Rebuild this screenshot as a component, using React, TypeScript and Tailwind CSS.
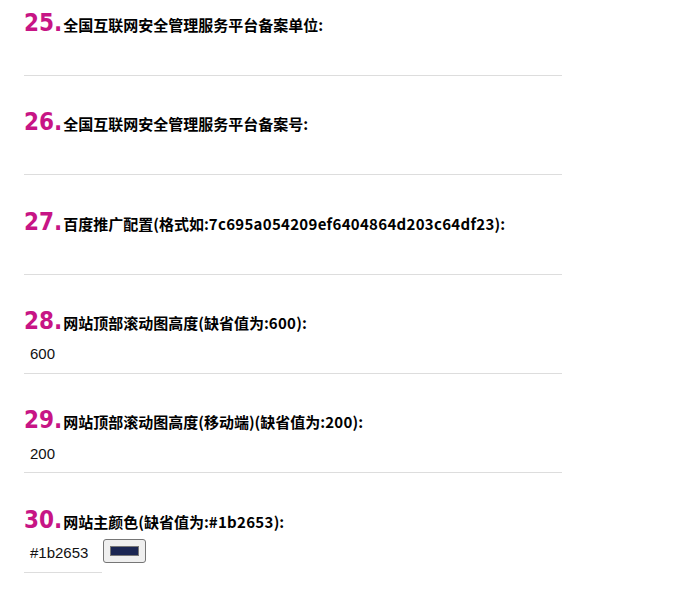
import React from "react";

type Item = { n: string; label: string; value?: string; color?: boolean };

const items: Item[] = [
  { n: "25", label: "全国互联网安全管理服务平台备案单位:" },
  { n: "26", label: "全国互联网安全管理服务平台备案号:" },
  { n: "27", label: "百度推广配置(格式如:7c695a054209ef6404864d203c64df23):" },
  { n: "28", label: "网站顶部滚动图高度(缺省值为:600):", value: "600" },
  { n: "29", label: "网站顶部滚动图高度(移动端)(缺省值为:200):", value: "200" },
  { n: "30", label: "网站主颜色(缺省值为:#1b2653):", value: "#1b2653", color: true },
];

function Label({ text }: { text: string }) {
  const parts = text.match(/[A-Za-z0-9#]+|[^A-Za-z0-9#]+/g) ?? [];
  return (
    <>
      {parts.map((p, i) =>
        /[A-Za-z0-9#]/.test(p[0]) ? (
          <span key={i} className="tracking-[0.3px]">
            {p}
          </span>
        ) : (
          <span key={i}>{p}</span>
        )
      )}
    </>
  );
}

function Heading({ n, label }: { n: string; label: string }) {
  return (
    <div className="flex h-[26px] items-baseline">
      <span
        className="text-[24px] font-bold leading-[22px] text-[#c71585]"
        style={{ fontFamily: '"DejaVu Sans Condensed", "DejaVu Sans", sans-serif' }}
      >
        {n}.
      </span>
      <span
        className="ml-[1px] text-[15px] font-bold leading-[22px] text-black"
        style={{ fontFamily: '"Noto Sans CJK SC", "Noto Sans", sans-serif' }}
      >
        <Label text={label} />
      </span>
    </div>
  );
}

export default function App() {
  return (
    <div className="min-h-[593px] w-[698px] bg-white pl-[24px] pt-[12px]">
      <div className="flex w-[538px] flex-col">
        {items.map((it, i) => (
          <div key={it.n} className={i === 0 ? "" : "mt-[35.33px]"}>
            <Heading n={it.n} label={it.label} />
            {it.color ? (
              <div className="flex h-[38px] items-center">
                <div
                  className="flex h-[38px] w-[78px] items-center border-b border-[#dddddd] pl-[6px] text-[15px] text-[#111]"
                  style={{ fontFamily: '"Liberation Sans", Arial, sans-serif' }}
                >
                  {it.value}
                </div>
                <div className="ml-[1px] mb-[6px] flex h-[24px] w-[43px] items-center justify-center rounded-[3px] border border-[#767676] bg-[#efefef]">
                  <div className="h-[10px] w-[29px] border border-[#777] bg-[#1b2653]" />
                </div>
              </div>
            ) : (
              <div
                className="flex h-[38px] items-center border-b border-[#dddddd] pl-[6px] text-[15px] text-[#111]"
                style={{ fontFamily: '"Liberation Sans", Arial, sans-serif' }}
              >
                {it.value ?? ""}
              </div>
            )}
          </div>
        ))}
      </div>
    </div>
  );
}
